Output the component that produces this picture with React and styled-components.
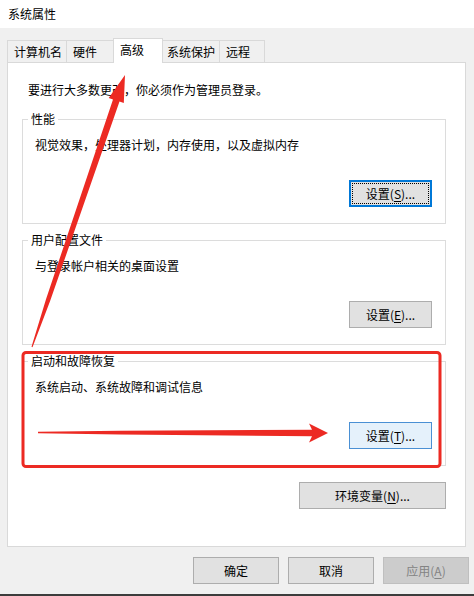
import React from 'react';
import styled, { createGlobalStyle, css } from 'styled-components';

const GlobalStyle = createGlobalStyle`
  html, body {
    margin: 0;
    padding: 0;
    background: #f0f0f0;
  }

  body {
    font-family: "Noto Sans CJK SC", "Noto Sans", sans-serif;
    font-size: 12px;
    color: #000000;
  }
`;

const Window = styled.div`
  position: relative;
  width: 474px;
  height: 596px;
  display: flex;
  flex-direction: column;
  background: #f0f0f0;
  overflow: hidden;
`;

const TitleBar = styled.div`
  height: 28px;
  flex: none;
  display: flex;
  align-items: center;
  padding-left: 8px;
  background: #ffffff;
  line-height: 16px;
`;

const TabStrip = styled.div`
  height: 34px;
  flex: none;
  display: flex;
  align-items: flex-end;
  padding-left: 7px;
`;

const Tab = styled.div`
  box-sizing: border-box;
  width: ${(p) => p.$width}px;
  height: 22px;
  margin-left: -1px;
  padding: 3px 0 0 6px;
  line-height: 16px;
  border: 1px solid #d9d9d9;
  border-bottom: 0;
  background: #f0f0f0;
  white-space: nowrap;

  &:first-child {
    margin-left: 0;
  }

  ${(p) =>
    p.$active &&
    css`
      position: relative;
      z-index: 1;
      width: ${p.$width + 4}px;
      height: 25px;
      margin: 0 -2px -1px -3px;
      padding-top: 3px;
      background: #ffffff;
    `}
`;

const Panel = styled.div`
  flex: 1;
  margin: 0 8px 0 7px;
  padding: 0 19px 0 14px;
  border: 1px solid #d9d9d9;
  background: #ffffff;
  display: flex;
  flex-direction: column;
`;

const Note = styled.div`
  margin-top: 19px;
  padding-left: 6px;
  line-height: 16px;
`;

const Group = styled.fieldset`
  margin: ${(p) => (p.$first ? 13 : 8)}px 0 0;
  padding: 0;
  min-width: 0;
  border: 1px solid #dcdcdc;
`;

const Legend = styled.legend`
  margin-left: 5px;
  padding: 0 3px;
  line-height: 16px;
`;

const Desc = styled.div`
  margin-top: 10px;
  padding-left: 12px;
  line-height: 16px;
`;

const ButtonRow = styled.div`
  display: flex;
  justify-content: flex-end;
  margin: ${(p) => p.$top ?? 27}px ${(p) => p.$right ?? 13}px ${(p) => p.$bottom ?? 16}px 0;
`;

const Button = styled.button`
  box-sizing: border-box;
  width: ${(p) => p.$width ?? 83}px;
  height: 27px;
  padding: 0;
  font: inherit;
  font-size: 12px;
  line-height: 16px;
  color: #000000;
  background: #e1e1e1;
  border: 1px solid #adadad;
  border-radius: 0;

  u {
    text-underline-offset: 2px;
  }

  ${(p) =>
    p.$variant === 'focused' &&
    css`
      border: 2px solid #0078d7;
      outline: 1px dotted #000000;
      outline-offset: -4px;
    `}

  ${(p) =>
    p.$variant === 'hover' &&
    css`
      background: #e5f1fb;
      border-color: #4a90d4;
    `}

  ${(p) =>
    p.$variant === 'disabled' &&
    css`
      background: #cccccc;
      border-color: #bfbfbf;
      color: #838383;
    `}
`;

const Footer = styled.div`
  height: 47px;
  flex: none;
  box-sizing: border-box;
  padding: 10px 5px 0 0;
  display: flex;
  justify-content: flex-end;
  align-items: flex-start;
  gap: 9px;
`;

const BottomEdge = styled.div`
  height: 2px;
  flex: none;
  background: #3c3c3c;
`;

const Annotations = styled.svg`
  position: absolute;
  top: 0;
  left: 0;
  pointer-events: none;
  z-index: 5;
`;

const RED = '#ec2a23';

const tabs = [
  { label: '计算机名', width: 60 },
  { label: '硬件', width: 50 },
  { label: '高级', width: 46, active: true },
  { label: '系统保护', width: 60 },
  { label: '远程', width: 46 },
];

const groups = [
  { title: '性能', desc: '视觉效果，处理器计划，内存使用，以及虚拟内存', key: 'S', variant: 'focused' },
  { title: '用户配置文件', desc: '与登录帐户相关的桌面设置', key: 'E' },
  { title: '启动和故障恢复', desc: '系统启动、系统故障和调试信息', key: 'T', variant: 'hover' },
];

const App = () => {
  return (
    <Window>
      <GlobalStyle />
      <TitleBar>系统属性</TitleBar>
      <TabStrip>
        {tabs.map((t) => (
          <Tab key={t.label} $width={t.width} $active={t.active}>{t.label}</Tab>
        ))}
      </TabStrip>
      <Panel>
        <Note>要进行大多数更改，你必须作为管理员登录。</Note>
        {groups.map((g, i) => (
          <Group key={g.title} $first={i === 0}>
            <Legend>{g.title}</Legend>
            <Desc>{g.desc}</Desc>
            <ButtonRow>
              <Button $variant={g.variant}>设置(<u>{g.key}</u>)...</Button>
            </ButtonRow>
          </Group>
        ))}
        <ButtonRow $top={16} $right={0} $bottom={0}>
          <Button $width={147}>环境变量(<u>N</u>)...</Button>
        </ButtonRow>
      </Panel>
      <Footer>
        <Button $width={86}>确定</Button>
        <Button $width={86}>取消</Button>
        <Button $width={86} $variant="disabled">应用(<u>A</u>)</Button>
      </Footer>
      <BottomEdge />

      <Annotations width="474" height="596" viewBox="0 0 474 596">
        <rect x="23" y="352.5" width="417" height="114" rx="3" fill="none" stroke={RED} strokeWidth="3" />
        <polygon
          fill={RED}
          points="31.5,346.8 46,299.3 113,99.4 108.7,97.9 125,75 123.8,103.1 119.5,101.6 50.2,300.7 32.5,347.2"
        />
        <polygon
          fill={RED}
          points="38,431.8 120,430.7 312,429.8 309,423.5 328,433 309,442.5 312,436.2 120,434.5 38,433.2"
        />
      </Annotations>
    </Window>
  );
};

export default App;
